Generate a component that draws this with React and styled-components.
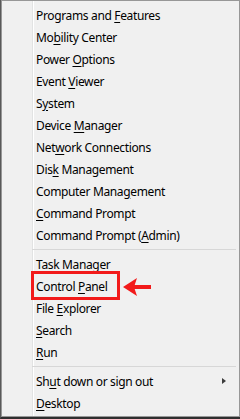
import React from "react";
import styled, { createGlobalStyle } from "styled-components";

const GlobalStyle = createGlobalStyle`
  html, body {
    margin: 0;
    padding: 0;
    background: #ffffff;
  }
  * {
    box-sizing: border-box;
  }
`;

const Frame = styled.div`
  width: 240px;
  height: 419px;
  border-left: 1px solid #595959;
  border-bottom: 2px solid #2e2e2e;
  font-family: "Noto Sans", "Open Sans", sans-serif;
  font-size: 12px;
  letter-spacing: -0.35px;
  color: #000;
`;

const Menu = styled.div`
  position: relative;
  display: flex;
  flex-direction: column;
  height: 100%;
  border: 1px solid #979797;
  padding: 3px 1px 2px 0;
  background:
    linear-gradient(
      to right,
      transparent 30px,
      #e2e3e3 30px,
      #e2e3e3 31px,
      #ffffff 31px,
      #ffffff 32px,
      transparent 32px
    ),
    #f0f0f0;
`;

const Item = styled.div`
  position: relative;
  display: flex;
  align-items: center;
  height: 22px;
  padding-left: 34px;
  white-space: nowrap;
`;

const Label = styled.span`
  flex: 1;
`;

const Key = styled.span`
  text-decoration: underline;
  text-underline-offset: 2px;
`;

const Separator = styled.div`
  height: 7px;
  margin: 0 2px 0 30px;
  padding-top: 3px;

  &::after {
    content: "";
    display: block;
    height: 1px;
    background: #d7d7d7;
  }
`;

const SubArrow = styled.span`
  margin-right: 12px;
  width: 0;
  height: 0;
  border-top: 3.5px solid transparent;
  border-bottom: 3.5px solid transparent;
  border-left: 4px solid #3c3c3c;
`;

/* annotation drawn over the menu */
const Mark = styled.span`
  position: absolute;
  left: 29px;
  top: -4px;
  width: 89px;
  height: 29px;
  border: 3px solid #f21a1a;
`;

const Pointer = styled.svg`
  position: absolute;
  left: 119px;
  top: 2px;
`;

const groups = [
  [
    ["Programs and ", "F", "eatures"],
    ["Mo", "b", "ility Center"],
    ["Power ", "O", "ptions"],
    ["Event ", "V", "iewer"],
    ["S", "y", "stem"],
    ["Device ", "M", "anager"],
    ["Net", "w", "ork Connections"],
    ["Dis", "k", " Management"],
    ["Computer Mana", "g", "ement"],
    ["", "C", "ommand Prompt"],
    ["Command Prompt (", "A", "dmin)"],
  ],
  [
    ["", "T", "ask Manager"],
    ["Control ", "P", "anel", "marked"],
    ["File ", "E", "xplorer"],
    ["", "S", "earch"],
    ["", "R", "un"],
  ],
  [
    ["Sh", "u", "t down or sign out", "sub"],
    ["", "D", "esktop"],
  ],
];

const App = () => (
  <>
    <GlobalStyle />
    <Frame>
      <Menu>
        {groups.map((group, gi) => (
          <React.Fragment key={gi}>
            {gi > 0 && <Separator />}
            {group.map(([before, key, after, flag]) => (
              <Item key={before + key + after}>
                <Label>
                  {before}
                  <Key>{key}</Key>
                  {after}
                </Label>
                {flag === "sub" && <SubArrow />}
                {flag === "marked" && (
                  <>
                    <Mark />
                    <Pointer width="32" height="20" viewBox="0 0 32 20">
                      <polygon points="2,10 16,1 13,10 16,19" fill="#f21a1a" />
                      <rect x="9" y="8" width="21" height="4" fill="#f21a1a" />
                    </Pointer>
                  </>
                )}
              </Item>
            ))}
          </React.Fragment>
        ))}
      </Menu>
    </Frame>
  </>
);

export default App;
